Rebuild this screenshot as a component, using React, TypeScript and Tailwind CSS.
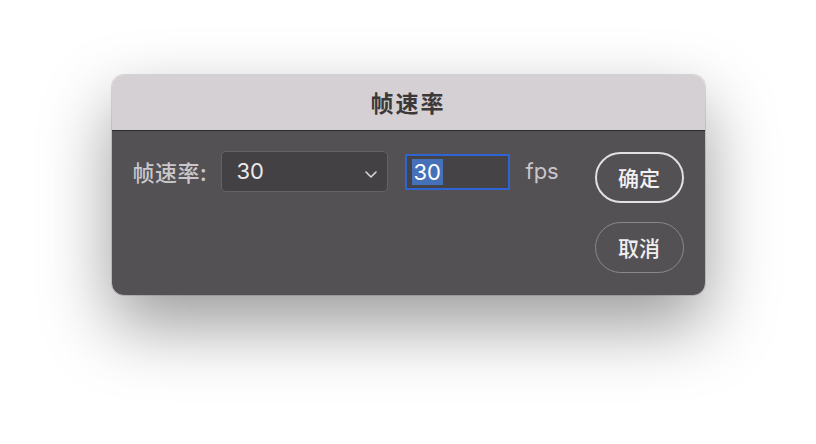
import React from "react";

export default function App() {
  const cjk = { fontFamily: '"Noto Sans CJK SC", "Noto Sans", sans-serif' };
  const latin = { fontFamily: 'Inter, "Noto Sans", "Noto Sans CJK SC", sans-serif' };
  return (
    <div className="w-[816px] h-[444px] bg-white flex justify-center pt-[75px]" style={cjk}>
      <div className="w-[593px] h-[220px] rounded-[12px] overflow-hidden flex flex-col shadow-[0_30px_70px_rgba(0,0,0,0.4),0_0_0_1px_rgba(0,0,0,0.12)]">
        <div className="h-[56px] bg-[#d5d0d3] border-b border-[#2c292c] flex items-center justify-center">
          <span className="text-[23px] font-bold text-[#3b383a] tracking-[2px] -mt-[1px]">帧速率</span>
        </div>
        <div className="flex-1 bg-[#545155] flex pl-[21px] pr-[21px] pt-[20px]">
          <div className="flex items-start">
            <div className="h-[41px] flex items-center text-[22px] font-medium text-[#cac7ca] w-[88px] tracking-[0.5px]">帧速率:</div>
            <div className="w-[167px] h-[41px] rounded-[5px] bg-[#444145] border border-[#656266] flex items-center pl-[15px] pr-[9px]">
              <span className="text-[22px] text-[#ebe9eb] flex-1" style={latin}>30</span>
              <svg width="14" height="9" viewBox="0 0 14 9" className="mt-[5px]">
                <path d="M2 2 L7 7 L12 2" fill="none" stroke="#d8d6d8" strokeWidth="1.6" strokeLinecap="round" strokeLinejoin="round" />
              </svg>
            </div>
            <div className="ml-[17px] mt-[3px] w-[105px] h-[36px] border-2 border-[#2f64d4] bg-[#464347] flex items-center pl-[5px]">
              <span className="text-[22px] leading-[26px] text-white bg-[#4671b8] px-[2px]" style={latin}>30</span>
            </div>
            <div className="ml-[16px] h-[41px] flex items-center text-[22px] text-[#c9c6c9]" style={latin}>fps</div>
          </div>
          <div className="ml-auto flex flex-col gap-[19px] mt-[1px]">
            <button className="w-[89px] h-[51px] rounded-full border-2 border-[#e2e0e2] text-[21px] font-medium text-[#f2f0f2] flex items-center justify-center">确定</button>
            <button className="w-[89px] h-[51px] rounded-full border border-[#8b888b] text-[21px] font-medium text-[#f0eef0] flex items-center justify-center">取消</button>
          </div>
        </div>
      </div>
    </div>
  );
}
